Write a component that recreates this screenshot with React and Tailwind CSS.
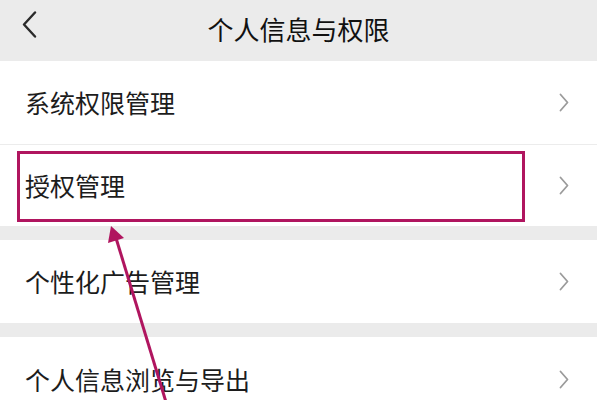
const Chevron = () => (
  <svg width="10" height="19" viewBox="0 0 10 19" className="shrink-0">
    <path d="M1.5 1.5 L8.5 9.5 L1.5 17.5" fill="none" stroke="#9b9b9b" strokeWidth="1.8" strokeLinecap="round" strokeLinejoin="round" />
  </svg>
);

const Row = ({ label, h }) => (
  <div className={`flex items-center justify-between bg-white pl-[25px] pr-[28px] ${h}`}>
    <span className="text-[25px] leading-none text-[#1c1c1c]">{label}</span>
    <Chevron />
  </div>
);

const App = () => {
  return (
    <div
      className="relative w-[597px] h-[400px] overflow-hidden bg-[#ebebeb]"
      style={{ fontFamily: '"Noto Sans CJK SC", "Noto Sans", sans-serif' }}
    >
      {/* 頂部標題列 */}
      <div className="relative flex h-[61px] items-center justify-center bg-[#ebebeb]">
        <svg width="16" height="28" viewBox="0 0 16 28" className="absolute left-[21px] top-[11px]">
          <path d="M14 1.5 L3 13.5 L14 25.5" fill="none" stroke="#2a2a2a" strokeWidth="2.4" strokeLinecap="round" strokeLinejoin="round" />
        </svg>
        <span className="mb-[3px] text-[26px] leading-none text-[#111]">个人信息与权限</span>
      </div>

      <Row label="系统权限管理" h="h-[83px]" />
      <div className="h-px bg-[#ececec]" />
      <Row label="授权管理" h="h-[81px]" />
      <div className="h-[14px]" />
      <Row label="个性化广告管理" h="h-[83px]" />
      <div className="h-[14px]" />
      <Row label="个人信息浏览与导出" h="h-[84px]" />

      {/* 標註框 */}
      <div className="absolute left-[17px] top-[151px] h-[71px] w-[508px] border-[3px] border-[#b0155f]" />

      {/* 標註箭頭 */}
      <svg className="absolute left-0 top-0" width="597" height="400" viewBox="0 0 597 400">
        <line x1="166" y1="402" x2="116" y2="238" stroke="#b0155f" strokeWidth="3" />
        <polygon points="111,226 108,243 124,238" fill="#b0155f" />
      </svg>
    </div>
  );
};

export default App;
